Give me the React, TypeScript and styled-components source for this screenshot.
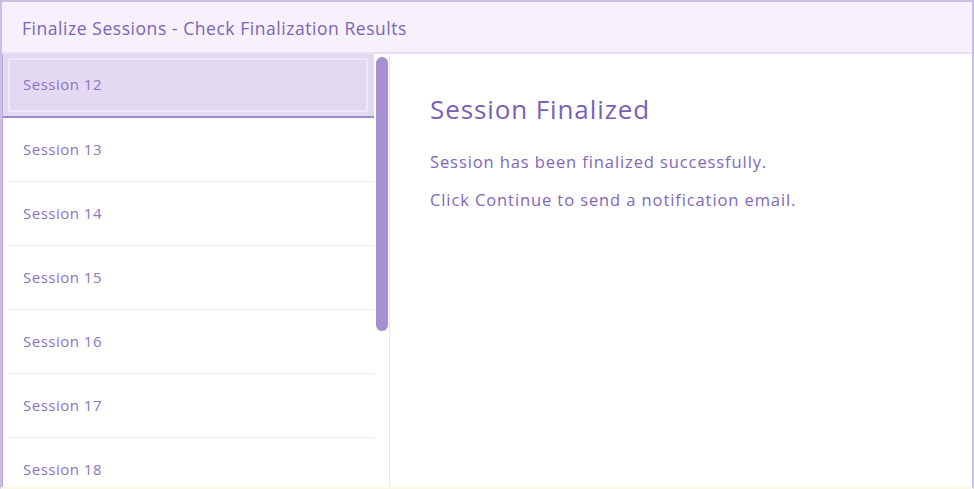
import styled, { createGlobalStyle } from 'styled-components';

const GlobalStyle = createGlobalStyle`
  html, body {
    margin: 0;
    padding: 0;
    background: #ffffff;
  }
  body {
    font-family: "Open Sans", Lato, sans-serif;
  }
`;

const Frame = styled.div`
  width: 974px;
  height: 489px;
  box-sizing: border-box;
  border: 2px solid #cdbfe3;
  border-bottom: 2px solid #fbf8e6;
  display: flex;
  flex-direction: column;
  overflow: hidden;
`;

const Header = styled.div`
  height: 52px;
  flex-shrink: 0;
  box-sizing: border-box;
  display: flex;
  align-items: center;
  padding: 1px 0 0 20px;
  background: #f6f1fc;
  border-bottom: 2px solid #e9e1f3;
  color: #7b64b2;
  font-size: 17.5px;
  letter-spacing: 0.55px;
`;

const Body = styled.div`
  flex: 1;
  display: flex;
  min-height: 0;
`;

const ListPane = styled.div`
  width: 388px;
  flex-shrink: 0;
  display: flex;
  border-right: 1px solid #ece6f3;
  box-sizing: border-box;
`;

const List = styled.ul`
  list-style: none;
  margin: 0;
  padding: 0;
  width: 373px;
  border-left: 1px solid #b9a6da;
`;

const Row = styled.li<{ $selected?: boolean }>`
  height: 64px;
  box-sizing: border-box;
  display: flex;
  align-items: center;
  padding-bottom: 2px;
  font-size: 15px;
  letter-spacing: 0.5px;
  color: #8c74c0;
  position: relative;
  background: ${({ $selected }) => ($selected ? '#e4d9f3' : '#ffffff')};
  border-bottom: ${({ $selected }) => ($selected ? '2px solid #9c88c9' : '1px solid #efeaf5')};
  margin-left: ${({ $selected }) => ($selected ? '0' : '6px')};
  padding-left: ${({ $selected }) => ($selected ? '20px' : '14px')};

  ${({ $selected }) =>
    $selected &&
    `
    &::after {
      content: '';
      position: absolute;
      left: 5px;
      top: 4px;
      right: 6px;
      bottom: 4px;
      border: 2px solid #efe8f8;
      pointer-events: none;
    }
  `}
`;

const ScrollTrack = styled.div`
  width: 15px;
  display: flex;
  justify-content: center;
  padding-top: 3px;
`;

const ScrollThumb = styled.div`
  width: 12px;
  height: 274px;
  border-radius: 6px;
  background: #a690cf;
`;

const Detail = styled.div`
  flex: 1;
  padding: 38px 0 0 40px;
  color: #7e63b6;
`;

const Title = styled.h2`
  margin: 0 0 24px;
  font-size: 26px;
  line-height: 34px;
  letter-spacing: 0.9px;
  font-weight: 400;
  color: #7a5fb4;
`;

const Line = styled.p`
  margin: 0 0 14px;
  font-size: 16.5px;
  line-height: 24px;
  letter-spacing: 0.9px;
  color: #8166ba;
`;

const sessions = [12, 13, 14, 15, 16, 17, 18];

export default function App() {
  return (
    <>
      <GlobalStyle />
      <Frame>
        <Header>Finalize Sessions - Check Finalization Results</Header>
        <Body>
          <ListPane>
            <List>
              {sessions.map((n) => (
                <Row key={n} $selected={n === 12}>
                  Session {n}
                </Row>
              ))}
            </List>
            <ScrollTrack>
              <ScrollThumb />
            </ScrollTrack>
          </ListPane>
          <Detail>
            <Title>Session Finalized</Title>
            <Line>Session has been finalized successfully.</Line>
            <Line>Click Continue to send a notification email.</Line>
          </Detail>
        </Body>
      </Frame>
    </>
  );
}
